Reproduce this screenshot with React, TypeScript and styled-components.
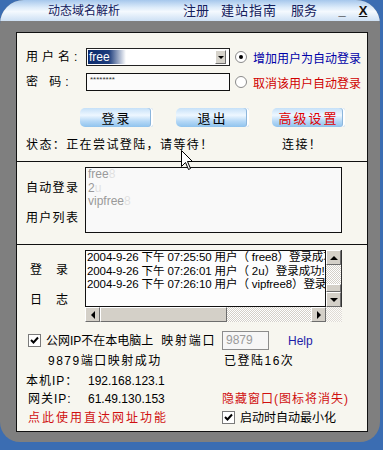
import React from "react";
import styled, { createGlobalStyle } from "styled-components";

const Global = createGlobalStyle`
  html, body { margin: 0; padding: 0; background: #3b6db2; }
  body { font-family: "Liberation Sans", "Noto Sans CJK SC", sans-serif; font-size: 12px; color: #000; }
  * { box-sizing: border-box; }
`;

const Win = styled.div`
  position: relative;
  width: 380px;
  height: 442px;
  background: #7f7f7f;
  border-radius: 24px 24px 20px 20px;
  overflow: hidden;
  display: flex;
  flex-direction: column;
`;

const TitleBar = styled.div`
  height: 21px;
  flex: none;
  display: flex;
  align-items: center;
  padding-left: 48px;
  background: linear-gradient(#a6c7ec 0%, #dcebfa 35%, #f4f9fe 55%, #cde0f4 100%);
  color: #15205c;
  font-size: 12px;
  line-height: 14px;
  white-space: nowrap;
`;

const TitleText = styled.span`
  width: 135px;
`;

const MenuItem = styled.span<{ $gap?: number; $ls?: number }>`
  margin-right: ${(p) => p.$gap ?? 0}px;
  letter-spacing: ${(p) => p.$ls ?? 0}px;
  font-size: 13px;
`;

const WinBtn = styled.span<{ $w: number; $u?: boolean }>`
  width: ${(p) => p.$w}px;
  font-weight: bold;
  font-size: 13px;
  color: #111;
  text-align: center;
  text-decoration: ${(p) => (p.$u ? "underline" : "none")};
`;

const Panel = styled.div`
  margin: 11px 0 0 16px;
  width: 352px;
  height: 400px;
  border: 1px solid #111;
  background: #f7f6ef;
  display: flex;
  flex-direction: column;
`;

const Section = styled.div<{ $h?: number; $pt: number; $line?: boolean }>`
  ${(p) => (p.$h ? `height: ${p.$h}px; flex: none;` : "flex: 1;")}
  padding: ${(p) => p.$pt}px 0 0 9px;
  border-bottom: ${(p) => (p.$line ? "1px solid #111" : "none")};
`;

const FormGrid = styled.div`
  display: grid;
  grid-template-columns: 55px 144px 1fr;
  grid-auto-rows: 18px;
  row-gap: 7px;
  column-gap: 5px;
  align-items: center;
`;

const Label = styled.span<{ $ls?: number; $pl?: number }>`
  letter-spacing: ${(p) => p.$ls ?? 0}px;
  padding-left: ${(p) => p.$pl ?? 0}px;
  white-space: pre;
  line-height: 14px;
`;

const SelectBox = styled.div`
  height: 18px;
  border: 1px solid #222;
  background: #fff;
  display: flex;
  align-items: center;
  padding: 0 2px 0 1px;
`;

const SelText = styled.span`
  flex: 1;
  line-height: 14px;
  color: #fff;
  font-size: 12px;
  span {
    display: inline-block;
    padding: 0 16px 0 1px;
    background: linear-gradient(90deg, #0b2a6c 0%, #1d3d7c 55%, rgba(255, 255, 255, 0) 100%);
  }
`;

const DropBtn = styled.div`
  width: 11px;
  height: 14px;
  margin-right: 1px;
  background: #d6d3cb;
  border: 1px solid;
  border-color: #fff #6d6d6d #6d6d6d #fff;
  display: flex;
  align-items: center;
  justify-content: center;
  &::after {
    content: "";
    border-left: 3px solid transparent;
    border-right: 3px solid transparent;
    border-top: 3px solid #000;
  }
`;

const PwdBox = styled.div`
  height: 18px;
  border: 1px solid #111;
  background: #fbfbfb;
  padding: 0 0 0 3px;
  font-size: 8px;
  line-height: 12px;
  color: #333;
`;

const RadioOpt = styled.label<{ $color: string }>`
  display: flex;
  align-items: center;
  gap: 6px;
  color: ${(p) => p.$color};
  font-size: 12px;
  white-space: nowrap;
`;

const Radio = styled.span<{ $on?: boolean }>`
  width: 12px;
  height: 12px;
  border-radius: 50%;
  border: 1px solid #8a8a8a;
  background: #fff;
  display: flex;
  align-items: center;
  justify-content: center;
  &::after {
    content: "";
    width: 4px;
    height: 4px;
    border-radius: 50%;
    background: ${(p) => (p.$on ? "#000" : "transparent")};
  }
`;

const ButtonRow = styled.div`
  display: flex;
  gap: 23px;
  margin: 17px 0 0 54px;
`;

const BlueBtn = styled.div<{ $red?: boolean }>`
  width: 73px;
  height: 19px;
  border-radius: 5px 3px 3px 5px;
  background: linear-gradient(#c5e0f8 0%, #eef7ff 38%, #b5d8f6 70%, #8fc3ee 100%);
  box-shadow: inset -2px 0 #ffffff, inset -3px 0 #8cb6dc;
  color: ${(p) => (p.$red ? "#e00000" : "#000")};
  display: flex;
  align-items: center;
  justify-content: center;
  letter-spacing: 2px;
  font-size: 13px;
`;

const StatusRow = styled.div`
  display: grid;
  grid-template-columns: 256px 1fr;
  margin-top: 11px;
  letter-spacing: 1.4px;
  line-height: 14px;
  font-size: 12px;
`;

const SideGrid = styled.div`
  display: grid;
  grid-template-columns: 59px 257px;
`;

const SideLabels = styled.div<{ $pt: number; $gap: number; $pl?: number }>`
  display: flex;
  flex-direction: column;
  padding-top: ${(p) => p.$pt}px;
  padding-left: ${(p) => p.$pl ?? 0}px;
  gap: ${(p) => p.$gap}px;
  line-height: 14px;
`;

const ListBox = styled.div`
  height: 66px;
  border: 1px solid #111;
  background: #f9f9f9;
  padding: 0 2px;
  color: #9a9a9a;
  line-height: 13.5px;
`;

const Ghost = styled.span`
  opacity: 0.25;
`;

const LogBox = styled.div`
  display: grid;
  grid-template-columns: 241px 16px;
  grid-template-rows: 57px 15px;
`;

const LogText = styled.div`
  border: 1px solid #111;
  background: #fdfdfd;
  padding: 0 1px;
  overflow: hidden;
  white-space: nowrap;
  line-height: 13.5px;
  font-size: 11.5px;
  letter-spacing: -0.1px;
`;

const Dither = `
  background: repeating-conic-gradient(#d4d0c8 0 25%, #ffffff 0 50%) 0 0 / 2px 2px;
`;

const VScroll = styled.div`
  display: flex;
  flex-direction: column;
  border-right: 1px solid #333;
`;

const HScroll = styled.div`
  display: flex;
`;

const Track = styled.div`
  flex: 1;
  ${Dither}
`;

const Thumb = styled.div<{ $w?: number; $h?: number }>`
  ${(p) => (p.$w ? `width: ${p.$w}px;` : "")}
  ${(p) => (p.$h ? `height: ${p.$h}px;` : "")}
  background: #d4d0c8;
  border: 1px solid;
  border-color: #fff #6d6d6d #6d6d6d #fff;
`;

const ArrowBtn = styled.div<{ $dir: "up" | "down" | "left" | "right"; $size: number }>`
  flex: none;
  width: ${(p) => (p.$dir === "up" || p.$dir === "down" ? "100%" : `${p.$size}px`)};
  height: ${(p) => (p.$dir === "up" || p.$dir === "down" ? `${p.$size}px` : "100%")};
  background: #d4d0c8;
  border: 1px solid;
  border-color: #fff #6d6d6d #6d6d6d #fff;
  display: flex;
  align-items: center;
  justify-content: center;
  &::after {
    content: "";
    ${(p) =>
      p.$dir === "up"
        ? "border-left:4px solid transparent;border-right:4px solid transparent;border-bottom:4px solid #000;"
        : p.$dir === "down"
        ? "border-left:4px solid transparent;border-right:4px solid transparent;border-top:4px solid #000;"
        : p.$dir === "left"
        ? "border-top:4px solid transparent;border-bottom:4px solid transparent;border-right:4px solid #000;"
        : "border-top:4px solid transparent;border-bottom:4px solid transparent;border-left:4px solid #000;"}
  }
`;

const Corner = styled.div`
  ${Dither}
  opacity: 0.7;
`;

const BottomGrid = styled.div`
  display: grid;
  grid-template-columns: 196px 1fr;
  grid-template-rows: 19px 21px 19px 18px 19px;
  margin-top: 9px;
  align-items: center;
  line-height: 14px;
  white-space: nowrap;
`;

const Cell = styled.div<{ $pl?: number; $gap?: number }>`
  display: flex;
  align-items: center;
  padding-left: ${(p) => p.$pl ?? 0}px;
  gap: ${(p) => p.$gap ?? 0}px;
`;

const Txt = styled.span<{ $color?: string; $ls?: number; $ml?: number; $w?: number }>`
  color: ${(p) => p.$color ?? "#000"};
  letter-spacing: ${(p) => p.$ls ?? 0}px;
  margin-left: ${(p) => p.$ml ?? 0}px;
  ${(p) => (p.$w ? `width: ${p.$w}px;` : "")}
`;

const Check = styled.span`
  width: 13px;
  height: 13px;
  flex: none;
  border: 1px solid #7a7a7a;
  background: #fff;
  display: flex;
  align-items: center;
  justify-content: center;
`;

const PortInput = styled.div`
  width: 47px;
  height: 19px;
  border: 1px solid #8c8c8c;
  background: #f6f6f6;
  color: #9a9a9a;
  padding: 1px 0 0 3px;
  line-height: 15px;
`;

const Cursor = styled.svg`
  position: absolute;
  left: 181px;
  top: 150px;
`;

const CheckMark = () => (
  <svg width="9" height="9" viewBox="0 0 9 9">
    <path d="M1 4 L3.5 6.5 L8 1.5" stroke="#000" strokeWidth="2" fill="none" />
  </svg>
);

const logLines = [
  "2004-9-26 下午 07:25:50 用户（ free8）登录成功!",
  "2004-9-26 下午 07:26:01 用户（ 2u）登录成功!",
  "2004-9-26 下午 07:26:10 用户（ vipfree8）登录成功!",
];

export default function App() {
  return (
    <>
      <Global />
      <Win>
        <TitleBar>
          <TitleText>动态域名解析</TitleText>
          <MenuItem $gap={12}>注册</MenuItem>
          <MenuItem $gap={14} $ls={1}>建站指南</MenuItem>
          <MenuItem $gap={19}>服务</MenuItem>
          <WinBtn $w={12}>_</WinBtn>
          <WinBtn $w={9} />
          <WinBtn $w={12} $u>X</WinBtn>
        </TitleBar>
        <Panel>
          <Section $h={129} $pt={15} $line>
            <FormGrid>
              <Label $ls={4}>用户名:</Label>
              <SelectBox>
                <SelText><span>free</span></SelText>
                <DropBtn />
              </SelectBox>
              <RadioOpt $color="#0000a8">
                <Radio $on />
                增加用户为自动登录
              </RadioOpt>
              <Label $ls={4}>{"密 码:"}</Label>
              <PwdBox>********</PwdBox>
              <RadioOpt $color="#d00000">
                <Radio />
                取消该用户自动登录
              </RadioOpt>
            </FormGrid>
            <ButtonRow>
              <BlueBtn>登录</BlueBtn>
              <BlueBtn>退出</BlueBtn>
              <BlueBtn $red>高级设置</BlueBtn>
            </ButtonRow>
            <StatusRow>
              <span>状态：正在尝试登陆，请等待！</span>
              <span>连接！</span>
            </StatusRow>
          </Section>
          <Section $h={83} $pt={5} $line>
            <SideGrid>
              <SideLabels $pt={14} $gap={16}>
                <Label $ls={1.3}>自动登录</Label>
                <Label $ls={1.3}>用户列表</Label>
              </SideLabels>
              <ListBox>
                <div>free<Ghost>8</Ghost></div>
                <div>2<Ghost>u</Ghost></div>
                <div>vipfree<Ghost>8</Ghost></div>
              </ListBox>
            </SideGrid>
          </Section>
          <Section $pt={5}>
            <SideGrid>
              <SideLabels $pt={13} $gap={16} $pl={4}>
                <Label $ls={1}>登　录</Label>
                <Label $ls={1}>日　志</Label>
              </SideLabels>
              <LogBox>
                <LogText>
                  {logLines.map((l) => (
                    <div key={l}>{l}</div>
                  ))}
                </LogText>
                <VScroll>
                  <ArrowBtn $dir="up" $size={15} />
                  <Track />
                  <Thumb $h={8} />
                  <ArrowBtn $dir="down" $size={15} />
                </VScroll>
                <HScroll>
                  <ArrowBtn $dir="left" $size={15} />
                  <Thumb $w={127} />
                  <Track />
                  <ArrowBtn $dir="right" $size={15} />
                </HScroll>
                <Corner />
              </LogBox>
            </SideGrid>
            <BottomGrid>
              <Cell $pl={2} $gap={5}>
                <Check><CheckMark /></Check>
                <Txt>公网IP不在本电脑上</Txt>
                <Txt $ls={1.7} $ml={3}>映射端口</Txt>
              </Cell>
              <Cell>
                <PortInput>9879</PortInput>
                <Txt $color="#1c1ca8" $ml={19}>Help</Txt>
              </Cell>
              <Cell $pl={22}>
                <Txt $ls={1.5}>9879端口映射成功</Txt>
              </Cell>
              <Cell $pl={2}>
                <Txt $ls={1.5}>已登陆16次</Txt>
              </Cell>
              <Cell>
                <Txt $w={62} $ls={1}>本机IP：</Txt>
                <Txt>192.168.123.1</Txt>
              </Cell>
              <Cell />
              <Cell $pl={2}>
                <Txt $w={60} $ls={1}>网关IP:</Txt>
                <Txt>61.49.130.153</Txt>
              </Cell>
              <Cell>
                <Txt $color="#d01010" $ls={1}>隐藏窗口(图标将消失)</Txt>
              </Cell>
              <Cell $pl={2}>
                <Txt $color="#d01010" $ls={2}>点此使用直达网址功能</Txt>
              </Cell>
              <Cell $gap={5}>
                <Check><CheckMark /></Check>
                <Txt>启动时自动最小化</Txt>
              </Cell>
            </BottomGrid>
          </Section>
        </Panel>
        <Cursor width="13" height="21" viewBox="0 0 13 21">
          <path d="M0.5 0.5 L0.5 16.5 L4.5 12.5 L7.5 19.5 L9.5 18.5 L6.5 11.5 L11.5 11.5 Z" fill="#fff" stroke="#000" strokeWidth="1" />
        </Cursor>
      </Win>
    </>
  );
}
